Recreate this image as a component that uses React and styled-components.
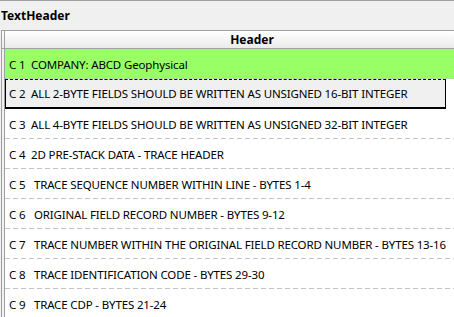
import styled, { createGlobalStyle } from "styled-components";

const rows = [
  { id: 1, text: "C 1  COMPANY: ABCD Geophysical", tone: "green" },
  { id: 2, text: "C 2  ALL 2-BYTE FIELDS SHOULD BE WRITTEN AS UNSIGNED 16-BIT INTEGER", tone: "current" },
  { id: 3, text: "C 3  ALL 4-BYTE FIELDS SHOULD BE WRITTEN AS UNSIGNED 32-BIT INTEGER" },
  { id: 4, text: "C 4  2D PRE-STACK DATA - TRACE HEADER" },
  { id: 5, text: "C 5   TRACE SEQUENCE NUMBER WITHIN LINE - BYTES 1-4" },
  { id: 6, text: "C 6   ORIGINAL FIELD RECORD NUMBER - BYTES 9-12" },
  { id: 7, text: "C 7   TRACE NUMBER WITHIN THE ORIGINAL FIELD RECORD NUMBER - BYTES 13-16" },
  { id: 8, text: "C 8   TRACE IDENTIFICATION CODE - BYTES 29-30" },
  { id: 9, text: "C 9   TRACE CDP - BYTES 21-24" },
];

const Global = createGlobalStyle`
  html, body {
    margin: 0;
    background: #f0f0f0;
    overflow: hidden;
  }
  body {
    font-family: "Noto Sans", "Open Sans", sans-serif;
    font-size: 11.5px;
    letter-spacing: -0.15px;
    color: #000;
  }
`;

const Panel = styled.div`
  width: 454px;
  height: 317px;
  border-top: 1px solid #a0a0a0;
  box-sizing: border-box;
  overflow: hidden;
  display: flex;
  flex-direction: column;
`;

const Title = styled.div`
  height: 29px;
  padding-left: 1px;
  font-size: 12px;
  font-weight: 700;
  letter-spacing: 0;
  display: flex;
  align-items: center;
`;

const Grid = styled.div`
  flex: 1;
  margin-left: 1px;
  border-top: 1px solid #a0a0a0;
  border-left: 1px solid #a0a0a0;
  display: grid;
  grid-template-columns: 3px 494px;
  grid-auto-rows: 30px;
  grid-template-rows: 18px;
  align-content: start;
  background: #fff;
  overflow: hidden;
`;

const Corner = styled.div`
  background: linear-gradient(#fdfdfd, #ebebeb);
  border-right: 1px solid #a0a0a0;
  border-bottom: 1px solid #a0a0a0;
`;

const ColumnHead = styled.div`
  background: linear-gradient(#ffffff, #ebebeb);
  border-bottom: 1px solid #a0a0a0;
  font-size: 12px;
  font-weight: 700;
  letter-spacing: 0;
  display: flex;
  align-items: center;
  justify-content: center;
`;

const RowHead = styled.div`
  background: #f0f0f0;
  border-right: 1px solid #a0a0a0;
`;

const Cell = styled.div`
  padding-left: 4px;
  display: flex;
  align-items: center;
  white-space: pre;
  box-sizing: border-box;
  background-color: ${({ $tone }) =>
    $tone === "green" ? "#99ff66" : $tone === "current" ? "#f0f0f0" : "#fff"};
  background-image: linear-gradient(to right, #c4c4c4 60%, transparent 60%);
  background-size: 8px 1px;
  background-repeat: repeat-x;
  background-position: left bottom;
  ${({ $tone }) =>
    $tone === "current" &&
    `
    background-image: none;
    border: 1px solid #000;
    border-top-style: dashed;
    border-bottom-width: 2px;
    width: 441px;
    padding-left: 3px;
  `}
`;

const RowPair = ({ row }) => (
  <>
    <RowHead />
    <Cell $tone={row.tone}>{row.text}</Cell>
  </>
);

const App = () => {
  return (
    <>
      <Global />
      <Panel>
        <Title>TextHeader</Title>
        <Grid>
          <Corner />
          <ColumnHead>Header</ColumnHead>
          {rows.map((r) => (
            <RowPair key={r.id} row={r} />
          ))}
        </Grid>
      </Panel>
    </>
  );
};

export default App;
